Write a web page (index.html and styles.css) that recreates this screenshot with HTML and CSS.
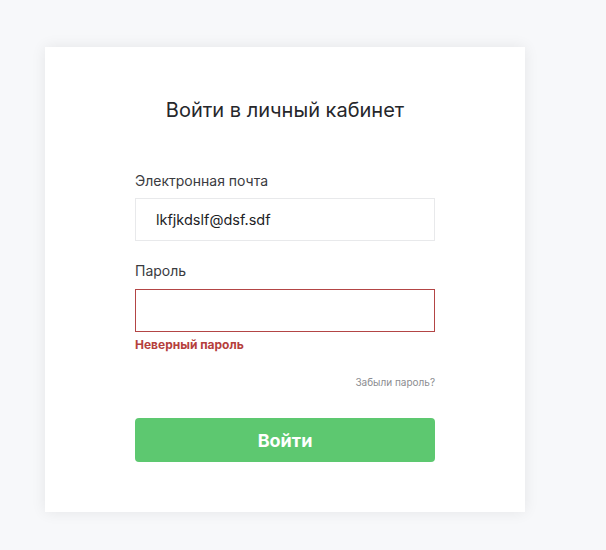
FILE: index.html
```html
<html>
<head>
<title>Вход в личный кабинет</title>
<link rel="stylesheet" href="styles.css">
</head>
<body>
<div class="login-card">
  <h1 class="login-title">Войти в личный кабинет</h1>
  <form class="login-form" name="login">
    <label class="field-label" for="email">Электронная почта</label>
    <input class="field-input" type="text" id="email" name="email" value="lkfjkdslf@dsf.sdf">

    <label class="field-label field-label_second" for="password">Пароль</label>
    <input class="field-input field-input_error" type="password" id="password" name="password">
    <div class="field-error">Неверный пароль</div>

    <a class="forgot-link" href="#">Забыли пароль?</a>

    <button class="login-button" type="button">Войти</button>
  </form>
</div>
</body>
</html>
```

FILE: styles.css
```css
body {
    margin: 0;
    padding: 47px 0 0 45px;
    background: #f7f8fa;
    font-family: Inter, "Noto Sans", sans-serif;
    color: #222326;
}

.login-card {
    width: 480px;
    box-sizing: border-box;
    padding: 51px 90px 50px;
    background: #fff;
    box-shadow: 0 0 14px rgba(0, 0, 0, 0.08);
}

.login-title {
    margin: 0;
    font-size: 20px;
    line-height: 24px;
    font-weight: 400;
    text-align: center;
    color: #26272b;
}

.login-form {
    display: flex;
    flex-direction: column;
    margin: 50px 0 0;
}

.field-label {
    font-size: 14px;
    line-height: 18px;
    color: #3a3b3f;
    margin-bottom: 8px;
}

.field-label_second {
    margin-top: 21px;
    margin-bottom: 9px;
}

.field-input {
    height: 43px;
    box-sizing: border-box;
    padding: 0 20px;
    border: 1px solid #e8e9eb;
    font-family: inherit;
    font-size: 14.5px;
    color: #222326;
    outline: none;
}

.field-input_error {
    border-color: #b34545;
}

.field-error {
    margin-top: 6px;
    font-size: 12px;
    line-height: 14px;
    font-weight: 700;
    color: #b5403c;
}

.forgot-link {
    align-self: flex-end;
    margin-top: 24px;
    font-size: 10px;
    line-height: 12px;
    color: #8b8c90;
    text-decoration: none;
}

.login-button {
    margin-top: 30px;
    height: 44px;
    border: none;
    border-radius: 4px;
    background: #5dc870;
    color: #fff;
    font-family: inherit;
    font-size: 18px;
    font-weight: 700;
    cursor: pointer;
}
```
